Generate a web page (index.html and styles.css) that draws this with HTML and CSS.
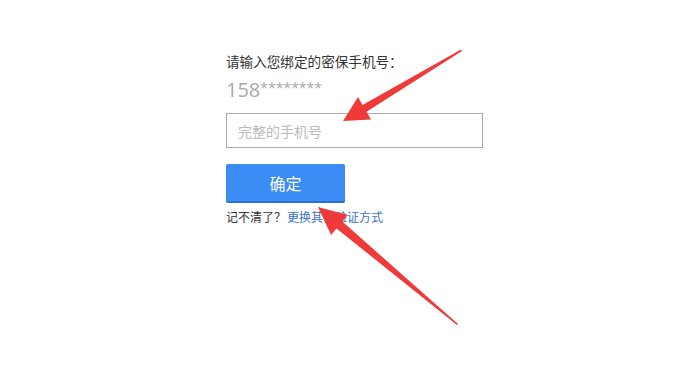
FILE: index.html
```html
<!DOCTYPE html>
<html lang="zh-CN">
<head>
    <meta charset="UTF-8">
    <title>验证密保手机</title>
    <link rel="stylesheet" href="styles.css">
</head>
<body>
    <div class="verify">
        <div class="verify-title">请输入您绑定的密保手机号：</div>
        <div class="verify-phone">158<span class="stars">********</span></div>
        <input class="verify-input" type="text" placeholder="完整的手机号">
        <button class="verify-btn">确定</button>
        <div class="verify-hint">记不清了？<a href="#" class="verify-link">更换其他验证方式</a></div>
    </div>

    <svg class="arrows" width="682" height="377" viewBox="0 0 682 377">
        <polygon points="462,51 366.5,111.7 371,119.5 343,121 358,97 362.5,104.9 461,49.5" />
        <polygon points="457,325 336.5,228.4 331,234.9 318,207 347.8,215.1 342.3,221.6 458,324" />
    </svg>
</body>
</html>
```

FILE: styles.css
```css
body {
    margin: 0;
    background: #fff;
    font-family: "Noto Sans CJK SC", "Liberation Sans", sans-serif;
    color: #333;
}

.verify {
    display: flex;
    flex-direction: column;
    align-items: flex-start;
    padding: 52px 0 0 226px;
}

.verify-title {
    font-size: 13.6px;
    line-height: 18px;
    color: #333;
}

.verify-phone {
    margin-top: 6px;
    font-family: "Open Sans", "Liberation Sans", sans-serif;
    font-size: 20px;
    line-height: 24px;
    color: #aaa;
}

.verify-phone .stars {
    font-size: 14px;
    vertical-align: 4px;
}

.verify-input {
    margin-top: 11px;
    box-sizing: border-box;
    width: 257px;
    height: 35px;
    padding: 0 11px;
    border: 1px solid #a9a9a9;
    border-radius: 0;
    outline: none;
    font-family: "Noto Sans CJK SC", sans-serif;
    font-size: 14px;
}

.verify-input::placeholder {
    color: #bbb;
}

.verify-btn {
    margin-top: 16px;
    box-sizing: border-box;
    width: 119px;
    height: 39px;
    border: none;
    border-bottom: 2px solid #2b6fcf;
    border-radius: 2px;
    background: #3b8cf4;
    color: #fff;
    font-family: "Noto Sans CJK SC", sans-serif;
    font-size: 16px;
    cursor: pointer;
}

.verify-hint {
    margin-top: 5px;
    font-size: 12px;
    line-height: 18px;
    color: #333;
}

.verify-link {
    margin-left: 1px;
    color: #3a73cc;
    text-decoration: none;
}

.arrows {
    position: absolute;
    top: 0;
    left: 0;
    pointer-events: none;
}

.arrows polygon {
    fill: #f03a3a;
}
```
